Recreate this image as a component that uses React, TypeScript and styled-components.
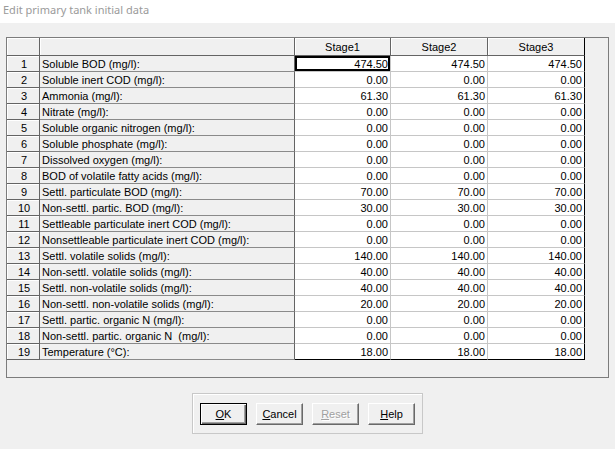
import React from 'react';
import styled, {createGlobalStyle, css} from "styled-components";

type RowType = {
    label: string
    value: string
}

const rows: RowType[] = [
    {label: "Soluble BOD (mg/l):", value: "474.50"},
    {label: "Soluble inert COD (mg/l):", value: "0.00"},
    {label: "Ammonia (mg/l):", value: "61.30"},
    {label: "Nitrate (mg/l):", value: "0.00"},
    {label: "Soluble organic nitrogen (mg/l):", value: "0.00"},
    {label: "Soluble phosphate (mg/l):", value: "0.00"},
    {label: "Dissolved oxygen (mg/l):", value: "0.00"},
    {label: "BOD of volatile fatty acids (mg/l):", value: "0.00"},
    {label: "Settl. particulate BOD (mg/l):", value: "70.00"},
    {label: "Non-settl. partic. BOD (mg/l):", value: "30.00"},
    {label: "Settleable particulate inert COD (mg/l):", value: "0.00"},
    {label: "Nonsettleable particulate inert COD (mg/l):", value: "0.00"},
    {label: "Settl. volatile solids (mg/l):", value: "140.00"},
    {label: "Non-settl. volatile solids (mg/l):", value: "40.00"},
    {label: "Settl. non-volatile solids (mg/l):", value: "40.00"},
    {label: "Non-settl. non-volatile solids (mg/l):", value: "20.00"},
    {label: "Settl. partic. organic N (mg/l):", value: "0.00"},
    {label: "Non-settl. partic. organic N  (mg/l):", value: "0.00"},
    {label: "Temperature (°C):", value: "18.00"},
]

const stages = ["Stage1", "Stage2", "Stage3"]

const GlobalStyle = createGlobalStyle`
  html, body {
    margin: 0;
    padding: 0;
    background: #f0f0f0;
  }
`

export default function App() {
    return (
        <Window>
            <GlobalStyle/>
            <TitleBar>Edit primary tank initial data</TitleBar>
            <Frame>
                <Grid>
                    <colgroup>
                        <col style={{width: 33}}/>
                        <col style={{width: 255}}/>
                        <col style={{width: 96}}/>
                        <col style={{width: 97}}/>
                        <col style={{width: 97}}/>
                    </colgroup>
                    <thead>
                    <tr>
                        <HeadCell/>
                        <HeadCell/>
                        {stages.map((s, i) => (
                            <HeadCell key={s} $last={i === stages.length - 1}>{s}</HeadCell>
                        ))}
                    </tr>
                    </thead>
                    <tbody>
                    {rows.map((r, i) => (
                        <tr key={i}>
                            <NumCell>{i + 1}</NumCell>
                            <LabelCell>{r.label}</LabelCell>
                            {stages.map((s, j) => (
                                <DataCell
                                    key={s}
                                    $lastCol={j === stages.length - 1}
                                    $lastRow={i === rows.length - 1}
                                    $focused={i === 0 && j === 0}
                                >
                                    {r.value}
                                </DataCell>
                            ))}
                        </tr>
                    ))}
                    </tbody>
                </Grid>
            </Frame>
            <Footer>
                <ButtonPanel>
                    <Button $default><u>O</u>K</Button>
                    <Button><u>C</u>ancel</Button>
                    <Button disabled><u>R</u>eset</Button>
                    <Button><u>H</u>elp</Button>
                </ButtonPanel>
            </Footer>
        </Window>
    );
}

const Window = styled.div`
  width: 615px;
  height: 449px;
  background: #f0f0f0;
  display: flex;
  flex-direction: column;
  overflow: hidden;
  font-family: "Liberation Sans", Arial, sans-serif;
  font-size: 11px;
  color: #000;
`

const TitleBar = styled.div`
  height: 23px;
  flex: none;
  background: #ffffff;
  padding: 2px 0 0 3px;
  box-sizing: border-box;
  font-family: "Noto Sans", "Open Sans", sans-serif;
  font-size: 11px;
  line-height: 15px;
  color: #9a9a9a;
`

const Frame = styled.div`
  margin: 14px 6px 0 6px;
  height: 341px;
  box-sizing: border-box;
  border: 1px solid #7c7c7c;
  background: #f0f0f0;
  flex: none;
`

const Grid = styled.table`
  table-layout: fixed;
  width: 578px;
  border-collapse: separate;
  border-spacing: 0;
  font-family: "Liberation Sans", Arial, sans-serif;
  font-size: 11px;

  td, th {
    box-sizing: border-box;
    padding: 0;
    line-height: 14px;
    white-space: pre;
    overflow: hidden;
  }
`

const fixedCell = css`
  background: #f0f0f0;
  border-right: 1px solid #646464;
  border-bottom: 1px solid #646464;
  box-shadow: inset 1px 1px 0 #ffffff;
`

const HeadCell = styled.th<{ $last?: boolean }>`
  ${fixedCell};
  height: 18px;
  font-weight: normal;
  text-align: center;
  vertical-align: middle;
  ${p => p.$last && css`border-right-color: #000;`}
`

const NumCell = styled.td`
  ${fixedCell};
  height: 16px;
  text-align: center;
  padding-left: 2px !important;
`

const LabelCell = styled.td`
  background: #f0f0f0;
  height: 16px;
  border-right: 1px solid #646464;
  border-bottom: 1px solid #8a8a8a;
  padding-left: 2px !important;
  text-align: left;
`

const DataCell = styled.td<{ $lastCol: boolean, $lastRow: boolean, $focused: boolean }>`
  background: #ffffff;
  height: 16px;
  border-right: 1px solid ${p => p.$lastCol ? "#000" : "#c6c6c6"};
  border-bottom: 1px solid ${p => p.$lastRow ? "#000" : "#c6c6c6"};
  text-align: right;
  padding-right: 2px !important;
  ${p => p.$focused && css`box-shadow: inset 0 0 0 2px #000;`}
`

const Footer = styled.div`
  display: flex;
  justify-content: center;
  padding-top: 15px;
`

const ButtonPanel = styled.div`
  display: flex;
  gap: 9px;
  padding: 9px 7px 8px 7px;
  border: 1px solid #c8c8c8;
  box-shadow: inset 1px 1px 0 #ffffff;
`

const Button = styled.button<{ $default?: boolean }>`
  width: 47px;
  height: 22px;
  padding: 0;
  box-sizing: border-box;
  background: #f0f0f0;
  font-family: "Liberation Sans", Arial, sans-serif;
  font-size: 11px;
  color: #000;
  border: 1px solid;
  border-color: #ffffff #696969 #696969 #ffffff;
  box-shadow: inset -1px -1px 0 #a0a0a0;

  u {
    text-decoration: underline;
    text-underline-offset: 1px;
  }

  ${p => p.$default && css`
    border: 1px solid #000;
    box-shadow: inset 1px 1px 0 #ffffff, inset -1px -1px 0 #696969, inset -2px -2px 0 #a0a0a0;
  `}

  &:disabled {
    color: #a0a0a0;
    text-shadow: 1px 1px 0 #ffffff;
  }
`
